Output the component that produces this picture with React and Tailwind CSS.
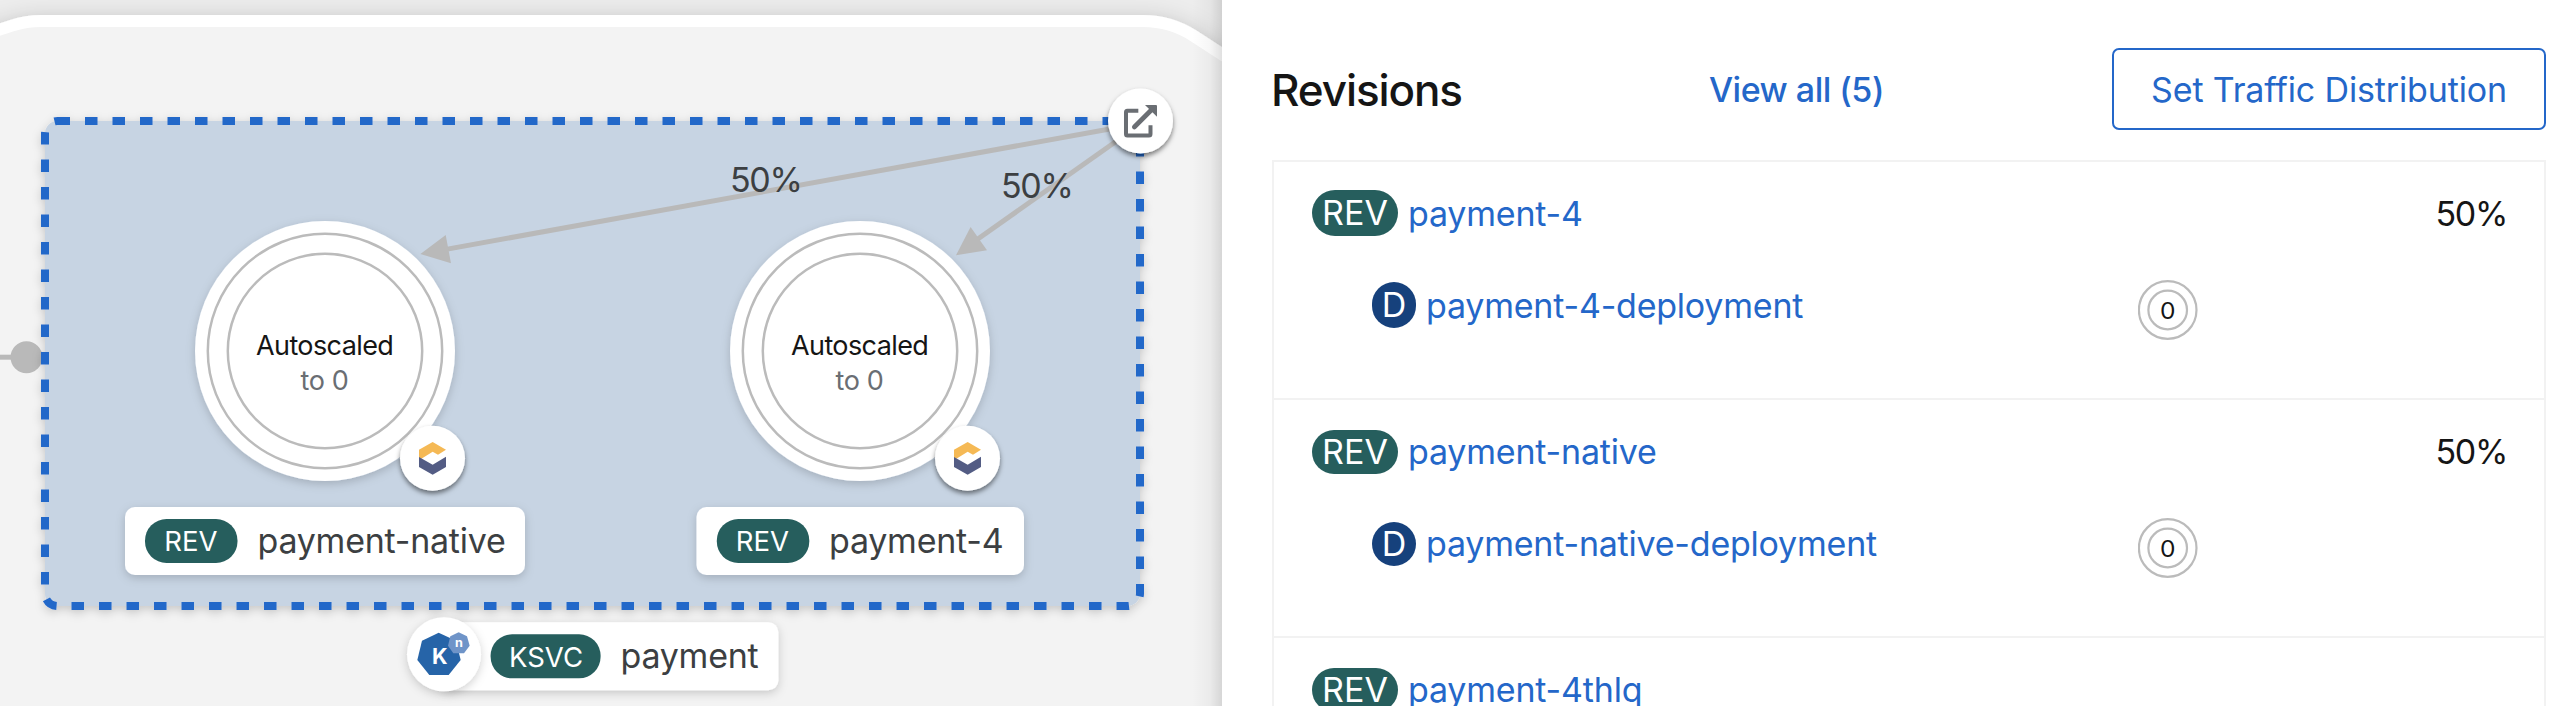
const CANVAS_FONT = "font-[Inter,sans-serif]";

function Label({ x, width, kind, kindX, badgeX, badgeWidth, name, nameX, y = 507 }) {
  return (
    <g>
      <rect x={x} y={y} width={width} height="68" rx="10" fill="#fff" filter="url(#soft)" />
      <rect x={badgeX} y={y + 12} width={badgeWidth} height="44" rx="21.5" fill="#265e5d" />
      <text x={kindX} y={y + 44.2} className="text-[27.5px] tracking-[0px]" fill="#fff">{kind}</text>
      <text x={nameX} y={y + 46} className="text-[34px] tracking-[-0.25px]" fill="#3c3f42">{name}</text>
    </g>
  );
}

function RevisionNode({ cx }) {
  return (
    <g>
      <circle cx={cx} cy="351" r="130" fill="#fff" filter="url(#soft)" />
      <circle cx={cx} cy="351" r="117.2" fill="none" stroke="#bbb" strokeWidth="2.5" />
      <circle cx={cx} cy="351" r="97.2" fill="none" stroke="#bbb" strokeWidth="2.5" />
      <text x={cx - 69} y="355" className="text-[27px] tracking-[-0.6px]" fill="#151515">Autoscaled</text>
      <text x={cx - 24.5} y="389.6" className="text-[27px] tracking-[-0.4px]" fill="#6a6e73">to 0</text>
      <circle cx={cx + 107.5} cy="458.3" r="32.5" fill="#fff" filter="url(#hard)" />
      <g transform={`translate(${cx + 65} 415) scale(0.3333)`}>
        <path d="M128 81 168 104 144 119 128 110 93 132 87 128V104Z" fill="#f5b955" />
        <path d="M87 126 128 149 168 125V156L128 179 87 156Z" fill="#535c84" />
      </g>
    </g>
  );
}

function Topology() {
  return (
    <svg width="1222" height="706" viewBox="0 0 1222 706" className={`block ${CANVAS_FONT}`}>
      <defs>
        <filter id="soft" x="-20%" y="-30%" width="140%" height="170%">
          <feDropShadow dx="0" dy="3" stdDeviation="5" floodColor="#030303" floodOpacity="0.18" />
        </filter>
        <filter id="hard" x="-30%" y="-30%" width="160%" height="170%">
          <feDropShadow dx="0" dy="3" stdDeviation="2.6" floodColor="#030303" floodOpacity="0.5" />
        </filter>
        <filter id="hull" filterUnits="userSpaceOnUse" x="-100" y="-60" width="1420" height="1000">
          <feDropShadow dx="0" dy="5" stdDeviation="12" floodColor="#030303" floodOpacity="0.22" />
        </filter>
        <linearGradient id="edge" x1="0" x2="1">
          <stop offset="0" stopColor="#000" stopOpacity="0" />
          <stop offset="0.6" stopColor="#000" stopOpacity="0.035" />
          <stop offset="1" stopColor="#000" stopOpacity="0.12" />
        </linearGradient>
      </defs>
      <rect width="1222" height="706" fill="#ededed" />
      <path
        d="M-60 49 12 25.6A94 94 0 0 1 41 21H1143A94 94 0 0 1 1194 36.1L1290 98.5V860H-60Z"
        fill="#f3f3f3" stroke="#fff" strokeWidth="12" filter="url(#hull)"
      />

      <path d="M0 357.2H20" stroke="#b9b9b9" strokeWidth="5" />
      <circle cx="26.5" cy="357.2" r="16" fill="#b9b9b9" />

      <g filter="url(#soft)">
        <rect x="45" y="121" width="1095" height="485" rx="12.5" fill="#c7d4e3" />
        <rect x="45" y="121" width="1095" height="485" rx="12.5" fill="none" stroke="#2467c9" strokeWidth="8" strokeDasharray="12.5 15" />
      </g>

      <g stroke="#b9b9b9" strokeWidth="5" fill="#b9b9b9">
        <path d="M1140 123.5 446 249.4" />
        <path d="M1140 124.5 975 241" />
        <path d="M420.4 254 445.7 235 451 263.2Z" stroke="none" />
        <path d="M956 255.3 970.6 227 987 250.3Z" stroke="none" />
      </g>
      <text x="730" y="192" className="text-[34px] tracking-[-1.3px]" fill="#3c3f42">50%</text>
      <text x="1001" y="198" className="text-[34px] tracking-[-1.3px]" fill="#3c3f42">50%</text>

      <RevisionNode cx={325} />
      <RevisionNode cx={860} />

      <Label x={125} width={400} badgeX={145} badgeWidth={92.5} kind="REV" kindX={164.2} name="payment-native" nameX={257.5} />
      <Label x={696.5} width={327.5} badgeX={716.8} badgeWidth={92.5} kind="REV" kindX={735.7} name="payment-4" nameX={829} />
      <Label x={440} width={338.4} y={622.3} badgeX={490.6} badgeWidth={110} kind="KSVC" kindX={509} name="payment" nameX={620.5} />

      <circle cx="444" cy="654.3" r="37" fill="#fff" filter="url(#soft)" />
      <g transform="translate(390 600) scale(0.3333)">
        <path d="M146 98 198 122 212 180 176 225H118L82 180 96 122Z" fill="#2664a8" />
        <text x="126" y="192" className="text-[65px] font-bold" fill="#fff">K</text>
        <path d="M206 97 231 109 239 137 222 160H190L174 137 181 109Z" fill="#6f94c8" />
        <text x="195" y="140" className="text-[38px] font-bold" fill="#fff">n</text>
      </g>

      <circle cx="1140.5" cy="121" r="32.5" fill="#fff" filter="url(#hard)" />
      <g transform="translate(1090 70) scale(0.3333)" fill="none" stroke="#6a6e73" strokeWidth="12">
        <path d="M145 122.500H112Q108 122.500 108 127V192Q108 196.500 112 196.500H177Q181.500 196.500 181.500 192V166" />
        <path d="M133 171 184 120" strokeWidth="14" strokeLinecap="round" />
        <path d="M165 105H198Q201 105 201 108V140Z" fill="#6a6e73" stroke="none" />
      </g>

      <rect x="1192" width="30" height="706" fill="url(#edge)" />
    </svg>
  );
}

function PodRing() {
  return (
    <svg width="60" height="60" viewBox="0 0 60 60" className="shrink-0">
      <circle cx="29.7" cy="30" r="28.8" fill="none" stroke="#bbb" strokeWidth="2.2" />
      <circle cx="29.7" cy="30" r="19.3" fill="none" stroke="#bbb" strokeWidth="2.2" />
      <text x="29.7" y="38.800" textAnchor="middle" className="text-[23px]" fill="#151515" textLength="15.500" lengthAdjust="spacingAndGlyphs">0</text>
    </svg>
  );
}

const revisions = [
  { name: "payment-4", deployment: "payment-4-deployment", traffic: "50%", badge: "h-[46px]" },
  { name: "payment-native", deployment: "payment-native-deployment", traffic: "50%", badge: "mt-[2px] h-[44px]" },
  { name: "payment-4thlq", badge: "mt-[2px] h-[44px]" },
];

function Revision({ name, deployment, traffic, badge }) {
  return (
    <li className="h-[238px] shrink-0 border-t-2 border-[#f2f2f2] pl-[38px] pr-[37px] pt-[28px] text-[34px] leading-[46px]">
      <div className="flex h-[46px]">
        <span className={`flex w-[86px] shrink-0 items-center justify-center rounded-full bg-[#265e5d] tracking-[0px] text-white ${badge}`}>REV</span>
        <a className="ml-[10px] pt-px tracking-[-0.2px] text-[#2467c9]">{name}</a>
        {traffic && <span className="ml-auto pt-px tracking-[-1.3px] text-[#151515]">{traffic}</span>}
      </div>
      {deployment && (
        <div className="mt-[44px] flex pl-[60px]">
          <div className="flex w-[766px] pt-[2px]">
            <span className={`flex w-[44px] shrink-0 items-center justify-center rounded-full bg-[#16417c] text-white ${badge}`}>D</span>
            <a className="ml-[10px] pt-px tracking-[-0.22px] text-[#2467c9]">{deployment}</a>
          </div>
          <PodRing />
        </div>
      )}
    </li>
  );
}

export default function App() {
  return (
    <main className="flex h-[706px] w-[2576px] overflow-hidden bg-white font-[Inter,sans-serif]">
      <section className="w-[1222px] shrink-0">
        <Topology />
      </section>
      <aside className="flex-1 bg-white pl-[50px] pr-[30px] pt-[48px]">
        <header className="flex h-[82px] items-center">
          <h2 className="-ml-px w-[438px] pt-[2px] text-[44px] font-medium tracking-[-1.1px] text-[#151515]">Revisions</h2>
          <a className="text-[34px] font-medium tracking-[-0.5px] text-[#2467c9]">View all (5)</a>
          <button className="ml-auto flex h-[82px] w-[434px] items-center justify-center rounded-[7px] border-2 border-[#2467c9] text-[34px] tracking-[-0.15px] text-[#2467c9]">
            Set Traffic Distribution
          </button>
        </header>
        <ul className="mt-[30px] flex flex-col border-x-2 border-[#f2f2f2]">
          {revisions.map((r) => (
            <Revision key={r.name} {...r} />
          ))}
        </ul>
      </aside>
    </main>
  );
}
